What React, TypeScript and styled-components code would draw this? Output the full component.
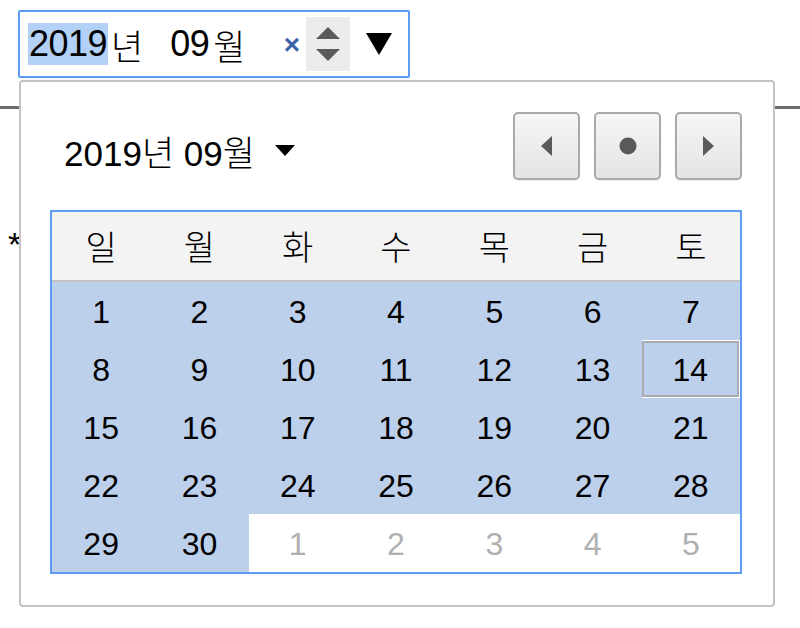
import React from "react";
import styled, { createGlobalStyle } from "styled-components";

const GlobalStyle = createGlobalStyle`
  body {
    margin: 0;
    background: #ffffff;
    font-family: "Liberation Sans", Arial, "Noto Sans CJK KR", sans-serif;
    color: #000;
  }
`;

const Page = styled.div`
  position: relative;
  width: 800px;
  height: 628px;
  overflow: hidden;
`;

const FieldRow = styled.div`
  padding: 10px 0 0 18px;
`;

const MonthInput = styled.div`
  box-sizing: border-box;
  width: 392px;
  height: 68px;
  border: 2px solid #5f9cef;
  border-radius: 2px;
  display: flex;
  align-items: center;
  padding: 0 0 0 8px;
  font-size: 36px;
  line-height: 1;
`;

const Segment = styled.span<{ $selected?: boolean }>`
  display: inline-block;
  padding: 3px 1px;
  background: ${(p) => (p.$selected ? "#b3d1f6" : "transparent")};
  letter-spacing: -0.5px;
`;

const Unit = styled.span<{ $gap?: number }>`
  margin: 0 ${(p) => p.$gap ?? 0}px 0 3px;
  font-family: "Noto Sans CJK KR", sans-serif;
  font-size: 35px;
  font-weight: 300;
`;

const Spacer = styled.div`
  flex: 1;
`;

const ClearBtn = styled.span`
  color: #3a62a6;
  font-size: 28px;
  font-weight: bold;
  margin-right: 6px;
  margin-top: 2px;
`;

const Spinner = styled.div`
  width: 44px;
  height: 54px;
  background: #ececec;
  display: flex;
  flex-direction: column;
  align-items: center;
  justify-content: center;
  gap: 10px;
`;

const DropBtn = styled.div`
  width: 58px;
  display: flex;
  justify-content: center;
`;

const Rule = styled.div`
  margin-top: 28px;
  height: 3px;
  background: #6e6e6e;
`;

const Star = styled.div`
  margin: 118px 0 0 8px;
  font-size: 34px;
  line-height: 1;
`;

const Popup = styled.div`
  position: absolute;
  left: 19px;
  top: 80px;
  box-sizing: border-box;
  width: 756px;
  height: 527px;
  background: #fff;
  border: 2px solid #c3c3c3;
  border-radius: 4px;
  padding: 30px 31px 29px 29px;
  display: flex;
  flex-direction: column;
  gap: 30px;
`;

const Header = styled.div`
  display: flex;
  align-items: center;
  justify-content: space-between;
  height: 68px;
`;

const MonthLabel = styled.div`
  display: flex;
  align-items: center;
  gap: 20px;
  padding: 8px 0 0 14px;
  font-size: 35px;
`;

const LabelUnit = styled.span`
  font-family: "Noto Sans CJK KR", sans-serif;
  font-size: 35px;
  font-weight: 300;
`;

const NavGroup = styled.div`
  display: flex;
  gap: 14px;
`;

const NavButton = styled.button`
  box-sizing: border-box;
  width: 67px;
  height: 68px;
  border: 2px solid #a9a9a9;
  border-radius: 5px;
  background: linear-gradient(#f6f6f6, #e4e4e4);
  box-shadow: 0 1px 1px rgba(0, 0, 0, 0.08);
  display: flex;
  align-items: center;
  justify-content: center;
  padding: 0;
`;

const Grid = styled.div`
  box-sizing: border-box;
  border: 2px solid #5f9cef;
  display: grid;
  grid-template-columns: repeat(7, 1fr);
`;

const WeekDay = styled.div`
  height: 70px;
  background: #f3f3f3;
  border-bottom: 2px solid #c4c4c4;
  display: flex;
  align-items: center;
  justify-content: center;
  font-family: "Noto Sans CJK KR", sans-serif;
  font-size: 34px;
  font-weight: 300;
  padding-bottom: 2px;
  box-sizing: border-box;
`;

const Day = styled.div<{ $outside?: boolean; $today?: boolean }>`
  box-sizing: border-box;
  display: flex;
  align-items: center;
  justify-content: center;
  font-size: 32px;
  padding-top: 2px;
  background: ${(p) => (p.$outside ? "#ffffff" : "#bccfeb")};
  color: ${(p) => (p.$outside ? "#b0b0b0" : "#000")};
  border: 2px solid ${(p) => (p.$today ? "#a9acb2" : "transparent")};
  margin: ${(p) => (p.$today ? "1px 1px 1px 0" : "0")};
  height: ${(p) => (p.$today ? "56px" : "58px")};
`;

type Dir = "up" | "down" | "left" | "right";

const Tri = ({ dir, w, h, color }: { dir: Dir; w: number; h: number; color: string }) => {
  const pts = {
    up: `0,${h} ${w / 2},0 ${w},${h}`,
    down: `0,0 ${w},0 ${w / 2},${h}`,
    left: `${w},0 ${w},${h} 0,${h / 2}`,
    right: `0,0 ${w},${h / 2} 0,${h}`,
  }[dir];
  return (
    <svg width={w} height={h} viewBox={`0 0 ${w} ${h}`}>
      <polygon points={pts} fill={color} />
    </svg>
  );
};

const weekdays = ["일", "월", "화", "수", "목", "금", "토"];

export default function App() {
  const days: { n: number; outside: boolean }[] = [];
  for (let i = 1; i <= 30; i++) days.push({ n: i, outside: false });
  for (let i = 1; i <= 5; i++) days.push({ n: i, outside: true });

  return (
    <Page>
      <GlobalStyle />
      <FieldRow>
        <MonthInput>
          <Segment $selected>2019</Segment>
          <Unit $gap={26}>년</Unit>
          <Segment>09</Segment>
          <Unit>월</Unit>
          <Spacer />
          <ClearBtn>×</ClearBtn>
          <Spinner>
            <Tri dir="up" w={24} h={12} color="#5a5a5a" />
            <Tri dir="down" w={24} h={12} color="#5a5a5a" />
          </Spinner>
          <DropBtn>
            <Tri dir="down" w={26} h={22} color="#000" />
          </DropBtn>
        </MonthInput>
      </FieldRow>
      <Rule />
      <Star>*</Star>

      <Popup>
        <Header>
          <MonthLabel>
            <span>
              2019<LabelUnit>년</LabelUnit> 09<LabelUnit>월</LabelUnit>
            </span>
            <Tri dir="down" w={20} h={11} color="#000" />
          </MonthLabel>
          <NavGroup>
            <NavButton>
              <Tri dir="left" w={11} h={20} color="#5a5a5a" />
            </NavButton>
            <NavButton>
              <svg width="18" height="18" viewBox="0 0 18 18">
                <circle cx="9" cy="9" r="8.5" fill="#5a5a5a" />
              </svg>
            </NavButton>
            <NavButton>
              <Tri dir="right" w={11} h={20} color="#5a5a5a" />
            </NavButton>
          </NavGroup>
        </Header>
        <Grid>
          {weekdays.map((w) => (
            <WeekDay key={w}>{w}</WeekDay>
          ))}
          {days.map((d, i) => (
            <Day key={i} $outside={d.outside} $today={!d.outside && d.n === 14}>
              {d.n}
            </Day>
          ))}
        </Grid>
      </Popup>
    </Page>
  );
}
